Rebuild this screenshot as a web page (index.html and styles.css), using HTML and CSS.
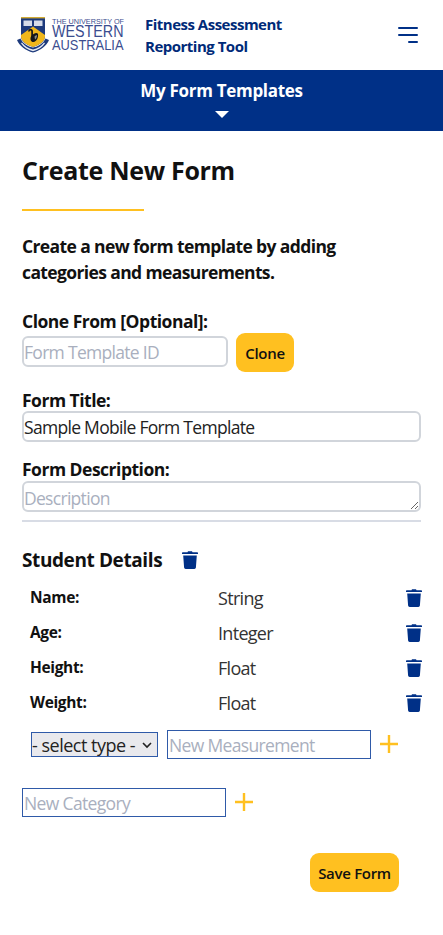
FILE: index.html
```html
<!DOCTYPE html>
<html lang="en">
<head>
<meta charset="utf-8">
<title>Create New Form</title>
<link rel="stylesheet" href="styles.css">
</head>
<body>
<svg class="sprite" width="0" height="0" aria-hidden="true">
  <symbol id="trash" viewBox="0 0 16 18">
    <path d="M5.500 1.200 6 .3h4l.5.9H15c.6 0 1 .4 1 1v.9H0v-.9c0-.6.4-1 1-1zM1.200 4.400h13.600l-.9 12.200c-.1.8-.7 1.400-1.500 1.400H3.600c-.8 0-1.400-.6-1.500-1.400z"/>
  </symbol>
  <symbol id="plus" viewBox="0 0 18 18">
    <path d="M9 0v18M0 9h18" fill="none" stroke="currentColor" stroke-width="2.400"/>
  </symbol>
</svg>
<header class="topbar">
  <svg class="logo" viewBox="0 0 122 36" role="img" aria-label="The University of Western Australia">
    <path d="M4 0h24v19c0 5-4.500 8.500-12 11C8.500 27.500 4 24 4 19z" fill="#1d3a7c"/>
    <path d="M4 0h24v1.400H4z" fill="#d2ab35"/>
    <path d="M6.500 3.500h8.500v5.500H6.500zM17 3.500h8.500v5.500H17z" fill="#d6dbe8"/>
    <path d="M16 9.500l12 8.500v1c0 5-4.500 8.500-12 11C8.500 27.500 4 24 4 19v-1z" fill="#f0b71c"/>
    <path d="M11.800 14.500c.3-2.300 3.300-2.500 3.300 0v5.500" fill="none" stroke="#14161c" stroke-width="1.700"/>
    <path d="M14 19.500c2-3 6-4.500 7-2.500.6 3.500-1.500 7.500-4.500 8-2.500.3-3.800-2.500-2.500-5.500z" fill="#14161c"/>
    <path d="M17.500 19.500c1-1 2-1.500 2.500-1.200 0 1.700-.8 3.300-2 4.300z" fill="#8d8f8a"/>
    <path d="M0 23l3.500-1.500c2.500 5 7 8 12.500 9 5.500-1 10-4 12.500-9L32 23c-2.500 6-8.500 10.500-16 12.500C8.500 33.500 2.500 29 0 23z" fill="#1d3a7c"/>
    <path d="M5 25.500c2.500 3.500 6.500 6 11 7 4.500-1 8.500-3.500 11-7l1 .8c-2.500 4-7 6.800-12 8-5-1.200-9.500-4-12-8z" fill="#e6e9f2"/>
    <text class="wm" x="35" y="6.500" font-size="7.500" textLength="72" lengthAdjust="spacingAndGlyphs">THE UNIVERSITY OF</text>
    <text class="wm" x="35" y="20.300" font-size="16" textLength="71.500" lengthAdjust="spacingAndGlyphs">WESTERN</text>
    <text class="wm" x="35" y="33.300" font-size="14.800" textLength="71.500" lengthAdjust="spacingAndGlyphs">AUSTRALIA</text>
  </svg>
  <div class="app-name">Fitness Assessment<br>Reporting Tool</div>
  <button class="menu-btn" aria-label="Menu">
    <span class="bar"></span><span class="bar"></span><span class="bar bar-short"></span>
  </button>
</header>
<nav class="subnav">
  <span class="subnav-title">My Form Templates</span>
  <span class="caret"></span>
</nav>
<main class="content">
  <h1 class="page-title">Create New Form</h1>
  <div class="rule"></div>
  <p class="intro">Create a new form template by adding categories and measurements.</p>

  <label class="label label-clone">Clone From [Optional]:</label>
  <div class="clone-row">
    <input class="field field-clone" placeholder="Form Template ID">
    <button class="btn btn-clone">Clone</button>
  </div>

  <label class="label label-title">Form Title:</label>
  <input class="field field-wide" value="Sample Mobile Form Template">

  <label class="label label-desc">Form Description:</label>
  <textarea class="field field-wide area" placeholder="Description" rows="1"></textarea>
  <hr class="divider">

  <div class="cat-head">
    <h2 class="cat-title">Student Details</h2>
    <svg class="trash"><use href="#trash"/></svg>
  </div>
  <div class="rows">
    <div class="row"><span class="m-name">Name:</span><span class="m-type">String</span><svg class="trash"><use href="#trash"/></svg></div>
    <div class="row"><span class="m-name">Age:</span><span class="m-type">Integer</span><svg class="trash"><use href="#trash"/></svg></div>
    <div class="row"><span class="m-name">Height:</span><span class="m-type">Float</span><svg class="trash"><use href="#trash"/></svg></div>
    <div class="row"><span class="m-name">Weight:</span><span class="m-type">Float</span><svg class="trash"><use href="#trash"/></svg></div>
  </div>
  <div class="add-row">
    <select class="type-select"><option>- select type -</option></select>
    <input class="box box-measure" placeholder="New Measurement">
    <svg class="plus"><use href="#plus"/></svg>
  </div>
  <div class="add-cat">
    <input class="box box-cat" placeholder="New Category">
    <svg class="plus"><use href="#plus"/></svg>
  </div>
  <div class="save-row"><button class="btn btn-save">Save Form</button></div>
</main>
</body>
</html>
```
FILE: styles.css
```css
* { box-sizing: border-box; }
html, body { margin: 0; padding: 0; background: #fff; }
body { font-family: "Open Sans", "Noto Sans", sans-serif; color: #111; width: 443px; height: 935px; overflow: hidden; }
.sprite { position: absolute; }

.topbar { height: 70px; display: flex; align-items: center; padding: 0 25px 0 17px; }
.logo { width: 122px; height: 36px; flex: none; margin-right: 6px; }
.wm { font-family: "Liberation Sans", sans-serif; fill: #3b4d8f; }
.app-name { color: #002a78; font-weight: 700; font-size: 15px; line-height: 22px; flex: 1; letter-spacing: -.5px; }
.menu-btn { border: 0; background: none; padding: 0; width: 20px; display: flex; flex-direction: column; align-items: flex-end; gap: 4.500px; }
.bar { display: block; width: 20px; height: 2.300px; background: #003087; border-radius: 2px; }
.bar-short { width: 10px; }

.subnav { height: 61px; background: #003087; color: #fff; display: flex; flex-direction: column; align-items: center; padding-top: 10px; }
.subnav-title { font-size: 17px; font-weight: 700; line-height: 22px; letter-spacing: -.3px; }
.caret { margin-top: 9px; width: 0; height: 0; border: 7px solid transparent; border-bottom: 0; border-top-color: #fff; }

.content { padding: 0 22px; }
.page-title { font-size: 25px; line-height: 36px; font-weight: 700; margin: 21px 0 0; letter-spacing: -.3px; }
.rule { width: 122px; height: 2px; background: #ffc020; margin-top: 21px; }
.intro { font-size: 17.500px; line-height: 26px; font-weight: 700; margin: 22px 0 0; letter-spacing: -.62px; }
.label { display: block; font-weight: 700; font-size: 17.500px; line-height: 24px; letter-spacing: -.5px; }
.label-clone { margin-top: 24px; }
.label-title { margin-top: 16px; margin-bottom: -1px; }
.label-desc { margin-top: 15px; margin-bottom: -1px; }
.clone-row { display: flex; align-items: flex-start; gap: 8px; }
.field { display: block; height: 31px; border: 2px solid #d1d5db; border-radius: 6px; padding: 0; font: inherit; font-size: 17.500px; letter-spacing: -.7px; color: #222; background: #fff; outline: 0; }
.field::placeholder, .box::placeholder { color: #a9afbe; opacity: 1; }
.field-clone { width: 206px; margin-top: 3px; }
.field-wide { width: 399px; }
.area { resize: vertical; line-height: 25px; overflow: hidden; margin-top: 1px; padding-top: 3px; }
.btn { border: 0; background: #ffc020; border-radius: 9px; color: #111; font: inherit; font-weight: 600; letter-spacing: -.3px; padding: 0; }
.btn-clone { width: 58px; height: 39px; font-size: 15px; }
.divider { border: 0; height: 2px; background: #d8dce5; margin: 8px 0 0; }

.cat-head { display: flex; align-items: center; gap: 20px; margin-top: 23px; height: 30px; }
.cat-title { font-size: 19px; font-weight: 700; margin: 0; letter-spacing: -.4px; }
.trash { width: 16px; height: 18px; fill: #003087; flex: none; }
.rows { padding-left: 8px; margin: 5px -1px 0 0; }
.row { display: flex; align-items: center; height: 35px; }
.m-name { width: 188px; font-size: 15.500px; font-weight: 700; letter-spacing: -.35px; margin-top: -1px; }
.m-type { flex: 1; font-size: 18px; color: #333; letter-spacing: -.7px; }
.add-row { display: flex; align-items: center; padding-left: 9px; margin-top: 10px; }
.type-select { appearance: none; width: 127px; height: 25px; font: inherit; font-size: 18px; letter-spacing: -.5px; color: #222; background: #e9e9ed url("data:image/svg+xml,%3Csvg xmlns='http://www.w3.org/2000/svg' width='12' height='8'%3E%3Cpath d='M2 2 6 6l4-4' fill='none' stroke='%23222' stroke-width='1.600'/%3E%3C/svg%3E") no-repeat right 4px center; border: 1.500px solid #2f5aa8; border-radius: 0; padding: 0; margin-right: 9px; }
.box { height: 29px; border: 1.500px solid #2f5aa8; border-radius: 0; padding: 0 0 0 1px; font: inherit; font-size: 17.500px; letter-spacing: -.65px; background: #fff; outline: 0; }
.box-measure { width: 204px; }
.box-cat { width: 204px; }
.plus { width: 18px; height: 18px; color: #ffc020; margin-left: 9px; flex: none; position: relative; top: -1px; }
.add-cat { display: flex; align-items: center; margin-top: 29px; }
.save-row { display: flex; justify-content: flex-end; padding-right: 22px; margin-top: 36px; }
.btn-save { width: 89px; height: 39px; font-size: 15px; }
```
